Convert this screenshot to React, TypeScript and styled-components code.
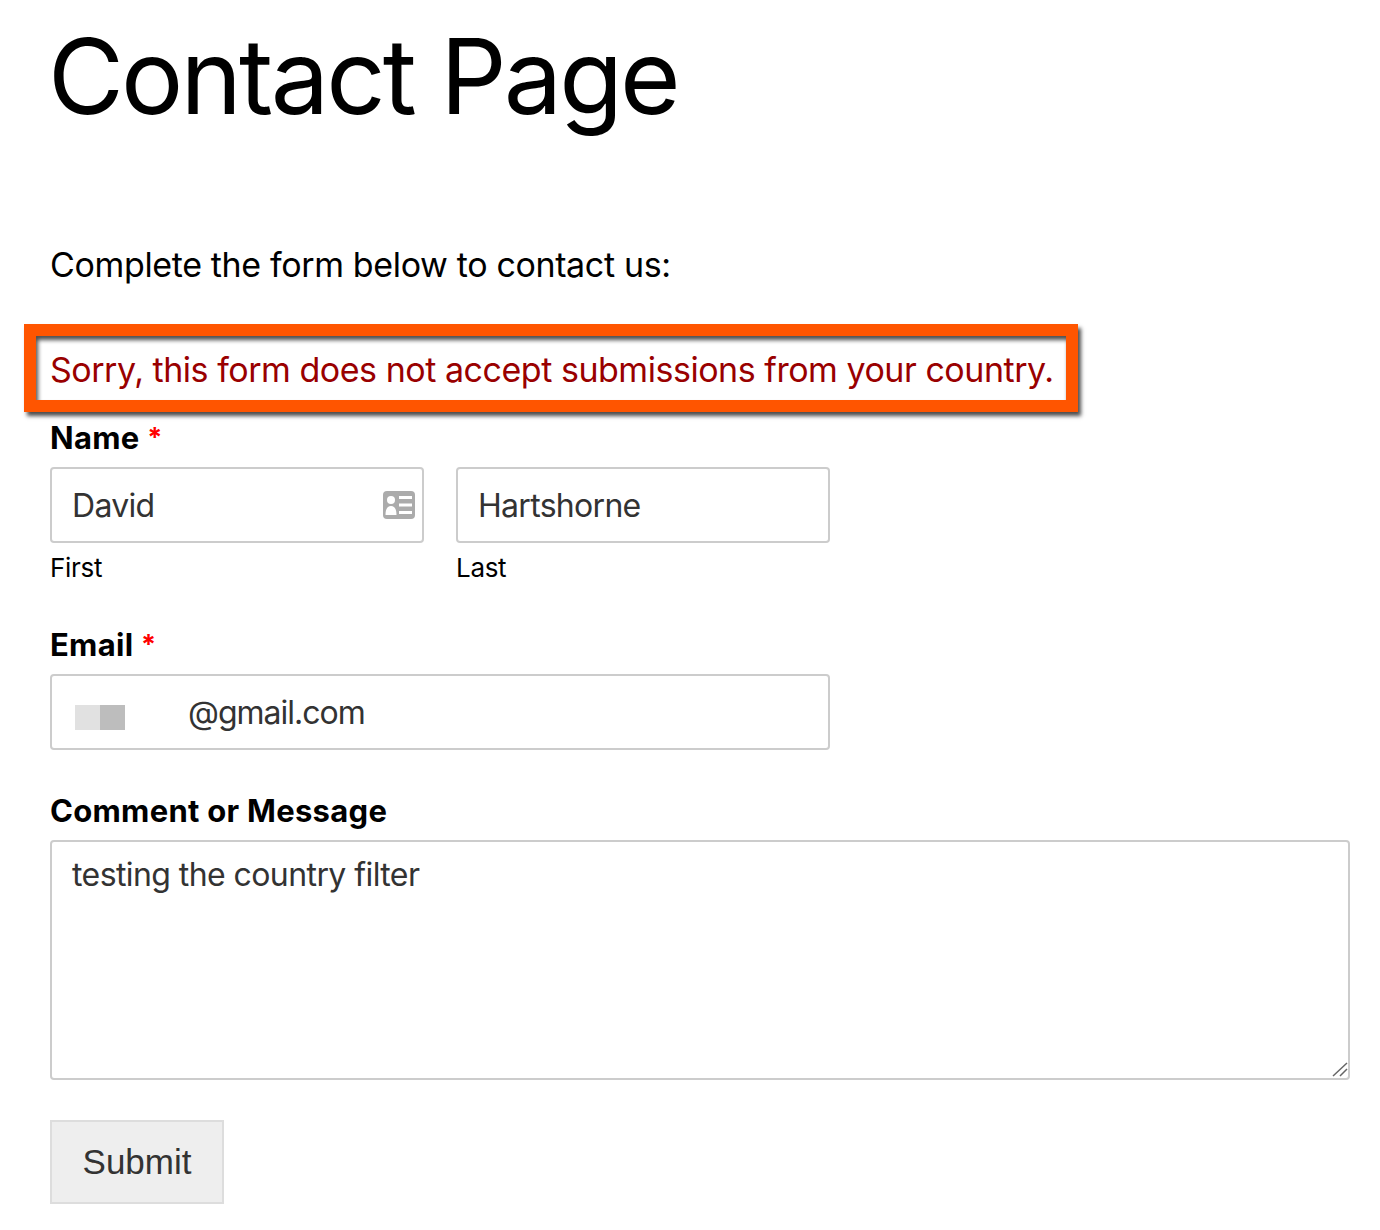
import { createGlobalStyle, styled } from 'styled-components'

const GlobalStyle = createGlobalStyle`
  html, body {
    margin: 0;
    background: #fff;
  }
  * {
    box-sizing: border-box;
  }
`

const Page = styled.div`
  width: 1380px;
  height: 1230px;
  overflow: hidden;
  padding: 0 30px 0 50px;
  font-family: Inter, "Liberation Sans", sans-serif;
  color: #000;
`

const Title = styled.h1`
  margin: 0 0 0 -2px;
  padding-top: 16px;
  height: 224px;
  font-size: 104px;
  font-weight: 400;
  line-height: 120px;
  letter-spacing: -2.9px;
`

const Intro = styled.p`
  margin: 0;
  height: 100px;
  padding-top: 20px;
  font-size: 34px;
  line-height: 42px;
  letter-spacing: -0.36px;
`

const ErrorBox = styled.div`
  margin-left: -26px;
  width: 1054px;
  height: 88px;
  border: 12px solid #ff5500;
  padding: 2px 0 0 14px;
  display: flex;
  align-items: center;
  font-size: 34px;
  letter-spacing: -0.47px;
  color: #990000;
  box-shadow: 3px 4px 4px rgba(0, 0, 0, 0.7), inset 2px 4px 4px rgba(0, 0, 0, 0.7);
`

const Field = styled.div<{ $height: number }>`
  height: ${({ $height }) => $height}px;
`

const Label = styled.div`
  height: 55px;
  padding-top: 7px;
  font-size: 31px;
  line-height: 38px;
  font-weight: 700;
  letter-spacing: 0.28px;
`

const Required = styled.span`
  color: #ff0000;
  font-size: 27px;
  position: relative;
  top: -2px;
`

const NameRow = styled.div`
  display: flex;
  gap: 32px;
`

const NameColumn = styled.div`
  position: relative;
  width: 374px;
`

const TextBox = styled.div<{ $width?: string; $tracking?: number }>`
  width: ${({ $width }) => $width || '100%'};
  height: 76px;
  padding: 0 20px;
  display: flex;
  align-items: center;
  border: 2px solid #cccccc;
  border-radius: 4px;
  font-size: 32px;
  letter-spacing: ${({ $tracking }) => $tracking ?? -0.7}px;
  color: #333;
`

const SubLabel = styled.div`
  margin-top: 9px;
  font-size: 26px;
  line-height: 32px;
  letter-spacing: -0.3px;
`

const ContactIcon = styled.svg`
  position: absolute;
  left: 333px;
  top: 24px;
`

const Redacted = styled.div`
  display: flex;
  width: 113px;
  margin: 10px 0 0 3px;
`

const RedactedBlock = styled.span<{ $tone: string }>`
  width: 25px;
  height: 25px;
  background: ${({ $tone }) => $tone};
`

const MessageBox = styled.div`
  position: relative;
  height: 240px;
  padding: 13px 20px;
  border: 2px solid #cccccc;
  border-radius: 4px;
  font-size: 32px;
  line-height: 40px;
  letter-spacing: -0.58px;
  color: #333;
`

const Grip = styled.svg`
  position: absolute;
  right: 0;
  bottom: 0;
`

const SubmitButton = styled.button`
  display: block;
  margin-top: 40px;
  width: 174px;
  height: 84px;
  padding: 0;
  background: #eeeeee;
  border: 2px solid #dddddd;
  font-family: "Liberation Sans", Arial, sans-serif;
  font-size: 35px;
  color: #333;
`

export default function App() {
  return (
    <Page>
      <GlobalStyle />
      <Title>Contact Page</Title>
      <Intro>Complete the form below to contact us:</Intro>
      <ErrorBox>Sorry, this form does not accept submissions from your country.</ErrorBox>

      <Field $height={207}>
        <Label>
          Name <Required>*</Required>
        </Label>
        <NameRow>
          <NameColumn>
            <TextBox>David</TextBox>
            <ContactIcon width="32" height="28" viewBox="0 0 32 28">
              <rect width="32" height="28" rx="4" fill="#ababab" />
              <circle cx="8" cy="9" r="4" fill="#fff" />
              <path d="M2.500 24c0-6 2-9 5.500-9s5.500 3 5.500 9z" fill="#fff" />
              <path d="M16 5h13v3H16zM16 12.500h13v3H16zM16 20h13v3H16z" fill="#fff" />
            </ContactIcon>
            <SubLabel>First</SubLabel>
          </NameColumn>
          <NameColumn>
            <TextBox>Hartshorne</TextBox>
            <SubLabel>Last</SubLabel>
          </NameColumn>
        </NameRow>
      </Field>

      <Field $height={166}>
        <Label>
          Email <Required>*</Required>
        </Label>
        <TextBox $width="780px" $tracking={-1}>
          <Redacted>
            <RedactedBlock $tone="#e1e1e1" />
            <RedactedBlock $tone="#bdbdbd" />
          </Redacted>
          @gmail.com
        </TextBox>
      </Field>

      <Label>Comment or Message</Label>
      <MessageBox>
        testing the country filter
        <Grip width="18" height="18" viewBox="0 0 18 18">
          <path d="M3 16 L17 3 M10 16 L17 9" stroke="#666" strokeWidth="1.5" fill="none" />
        </Grip>
      </MessageBox>

      <SubmitButton>Submit</SubmitButton>
    </Page>
  )
}
